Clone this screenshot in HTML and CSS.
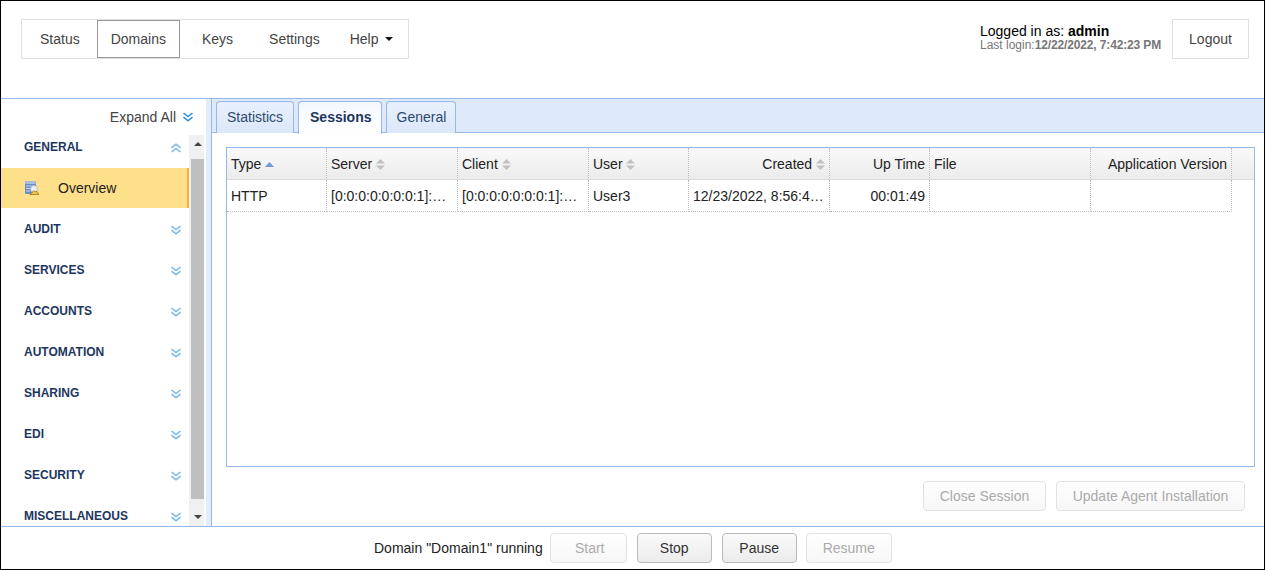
FILE: index.html
```html
<!DOCTYPE html>
<html lang="en">
<head>
<meta charset="utf-8">
<title>Domains</title>
<link rel="stylesheet" href="styles.css">
</head>
<body>
<svg class="defs" width="0" height="0" aria-hidden="true">
  <symbol id="chev-down" viewBox="0 0 10 10"><path d="M.5 1 5 4.600 9.500 1M.5 5.200 5 8.800 9.500 5.200" fill="none" stroke="currentColor" stroke-width="1.500"/></symbol>
  <symbol id="chev-up" viewBox="0 0 10 10"><path d="M.5 4.800 5 1.200 9.500 4.800M.5 9 5 5.400 9.500 9" fill="none" stroke="currentColor" stroke-width="1.500"/></symbol>
  <symbol id="sort" viewBox="0 0 9 11"><path d="M4.500 0 9 4.500H0zM4.500 11 0 6.500h9z" fill="currentColor"/></symbol>
</svg>
<div class="app">
  <header class="topbar">
    <nav class="nav">
      <a class="nav-item status">Status</a>
      <a class="nav-item current">Domains</a>
      <a class="nav-item keys">Keys</a>
      <a class="nav-item">Settings</a>
      <a class="nav-item help">Help<span class="caret"></span></a>
    </nav>
    <div class="account">
      <div class="who">Logged in as: <b>admin</b></div>
      <div class="last">Last login:<b>12/22/2022, 7:42:23 PM</b></div>
    </div>
    <button class="logout">Logout</button>
  </header>
  <div class="middle">
    <aside class="sidebar">
      <div class="expand">Expand All <svg class="chev strong"><use href="#chev-down"/></svg></div>
      <div class="side-body">
        <div class="side-list">
          <div class="group">GENERAL<svg class="chev"><use href="#chev-up"/></svg></div>
          <div class="side-link">
            <svg class="dbicon" viewBox="0 0 14 14">
              <rect x="0" y="0" width="11" height="13" rx="1.500" fill="#6b8cc4"/>
              <rect x="0" y="0" width="11" height="3" rx="1.500" fill="#a9bfe0"/>
              <path d="M1 5h9M1 7.500h5M1 10h4" stroke="#c9d7ee" stroke-width="1"/>
              <circle cx="9" cy="8" r="3.500" fill="#eef0f2" stroke="#9aa5b5" stroke-width=".6"/>
              <path d="M5 13.500 9 9.500l1.500 1.500 1-1 2.500 3.500z" fill="#e9c33c" stroke="#7f6510" stroke-width=".6"/>
            </svg>
            Overview
          </div>
          <div class="group">AUDIT<svg class="chev"><use href="#chev-down"/></svg></div>
          <div class="group">SERVICES<svg class="chev"><use href="#chev-down"/></svg></div>
          <div class="group">ACCOUNTS<svg class="chev"><use href="#chev-down"/></svg></div>
          <div class="group">AUTOMATION<svg class="chev"><use href="#chev-down"/></svg></div>
          <div class="group">SHARING<svg class="chev"><use href="#chev-down"/></svg></div>
          <div class="group">EDI<svg class="chev"><use href="#chev-down"/></svg></div>
          <div class="group">SECURITY<svg class="chev"><use href="#chev-down"/></svg></div>
          <div class="group">MISCELLANEOUS<svg class="chev"><use href="#chev-down"/></svg></div>
        </div>
        <div class="scrollbar">
          <span class="arrow up"></span>
          <span class="thumb"></span>
          <span class="arrow down"></span>
        </div>
      </div>
    </aside>
    <div class="splitter"></div>
    <main class="content">
      <div class="tabs">
        <a class="tab">Statistics</a>
        <a class="tab active">Sessions</a>
        <a class="tab last-tab">General</a>
      </div>
      <div class="panel">
        <div class="grid">
          <table>
            <colgroup>
              <col class="c100"><col class="c131"><col class="c131"><col class="c100"><col class="c141"><col class="c100"><col class="c161"><col class="c141"><col>
            </colgroup>
            <thead>
              <tr>
                <th>Type <svg class="sort asc" viewBox="0 0 9 5"><path d="M4.500 0 9 5H0z" fill="currentColor"/></svg></th>
                <th>Server <svg class="sort"><use href="#sort"/></svg></th>
                <th>Client <svg class="sort"><use href="#sort"/></svg></th>
                <th>User <svg class="sort"><use href="#sort"/></svg></th>
                <th class="right">Created <svg class="sort"><use href="#sort"/></svg></th>
                <th class="right">Up Time</th>
                <th>File</th>
                <th class="right">Application Version</th>
                <th class="filler"></th>
              </tr>
            </thead>
            <tbody>
              <tr>
                <td>HTTP</td>
                <td>[0:0:0:0:0:0:0:1]:…</td>
                <td>[0:0:0:0:0:0:0:1]:…</td>
                <td>User3</td>
                <td>12/23/2022, 8:56:4…</td>
                <td class="right">00:01:49</td>
                <td></td>
                <td></td>
                <td class="filler"></td>
              </tr>
            </tbody>
          </table>
        </div>
        <div class="actions">
          <button class="btn disabled close">Close Session</button>
          <button class="btn disabled agent">Update Agent Installation</button>
        </div>
      </div>
    </main>
  </div>
  <footer class="footer">
    <span class="state">Domain "Domain1" running</span>
    <button class="btn disabled start">Start</button>
    <button class="btn stop">Stop</button>
    <button class="btn pause">Pause</button>
    <button class="btn disabled resume">Resume</button>
  </footer>
</div>
</body>
</html>
```
FILE: styles.css
```css
* { box-sizing: border-box; }
html, body { margin: 0; padding: 0; height: 100%; }
body { font-family: "Liberation Sans", Arial, sans-serif; font-size: 14px; color: #333; background: #fff; overflow: hidden; }
.defs { position: absolute; }
button { font: inherit; }

.app { width: 1265px; height: 570px; border: 1px solid #000; display: flex; flex-direction: column; }

.topbar { height: 97px; flex: none; display: flex; align-items: flex-start; padding: 18px 15px 0 20px; }
.nav { display: flex; height: 40px; width: 388px; border: 1px solid #e0e0e0; padding: 0; }
.nav-item { display: flex; align-items: center; padding: 0 18px; height: 38px; color: #444; }
.nav-item.status { padding-right: 17px; }
.nav-item.current { padding: 0 13px; border: 1px solid #999; }
.nav-item.keys { margin-left: 4px; }
.nav-item.help { padding: 0 0 0 12px; }
.caret { width: 0; height: 0; margin-left: 7px; border-left: 4px solid transparent; border-right: 4px solid transparent; border-top: 4px solid #111; }
.account { margin-left: auto; margin-right: 11px; padding-top: 5px; width: 181px; color: #000; line-height: 14px; white-space: nowrap; }
.last { font-size: 12px; line-height: 14px; color: #777; }
.last b { letter-spacing: -.14px; }
.logout { width: 77px; height: 40px; background: #fff; border: 1px solid #e0e0e0; color: #444; padding: 0; }

.middle { flex: 1; min-height: 0; display: flex; border-top: 1px solid #94b8e8; border-bottom: 1px solid #94b8e8; }

.sidebar { width: 205px; flex: none; display: flex; flex-direction: column; }
.expand { height: 36px; flex: none; display: flex; align-items: center; justify-content: flex-end; gap: 7px; padding-right: 13px; color: #444; }
.side-body { flex: 1; min-height: 0; display: flex; padding-right: 2px; }
.side-list { flex: 1; min-width: 0; overflow: hidden; }
.group { height: 41px; display: flex; align-items: center; justify-content: space-between; padding: 0 8px 0 23px; font-size: 12px; font-weight: bold; color: #1d3660; flex: none; }
.group:first-child { height: 33px; padding-bottom: 10px; }
.chev { width: 10px; height: 10px; color: #74b6ee; flex: none; }
.group .chev { margin-top: 2px; }
.chev.strong { color: #2a8fdc; }
.side-link { height: 40px; display: flex; align-items: center; padding-left: 24px; background: #ffe08a; border-right: 2px solid #ffae42; color: #222; }
.dbicon { width: 14px; height: 14px; margin-right: 19px; }
.scrollbar { width: 15px; flex: none; background: #f0f0f0; display: flex; flex-direction: column; align-items: center; padding: 0 0 0 2px; }
.arrow { width: 0; height: 0; border-left: 4px solid transparent; border-right: 4px solid transparent; flex: none; }
.arrow.up { border-bottom: 4px solid #444; margin: 7px 0 13px; }
.arrow.down { border-top: 4px solid #444; margin: 16px 0 7px; }
.thumb { width: 100%; flex: 1; background: #bfbfbf; }

.splitter { width: 6px; flex: none; background: #e4ecf7; border-right: 1px solid #94b8e8; }

.content { flex: 1; min-width: 0; display: flex; flex-direction: column; }
.tabs { height: 34px; flex: none; display: flex; gap: 4px; padding: 2px 0 0 4px; background: #deeafc; border-bottom: 1px solid #94b8e8; }
.tab { height: 32px; padding: 0 10px 1px; display: flex; align-items: center; border: 1px solid #94b8e8; border-bottom: none; border-radius: 4px 4px 0 0; color: #2f4a6e; background: linear-gradient(#e8f0fc, #dbe8fb); }
.tab.last-tab { padding-right: 9px; }
.tab.active { padding: 0 9px 2px 11px; font-weight: bold; color: #1d3660; background: linear-gradient(#f4f8fe, #fff); margin-bottom: -1px; height: 33px; }

.panel { flex: 1; min-height: 0; padding: 14px 9px 0 14px; display: flex; flex-direction: column; }
.grid { height: 320px; flex: none; border: 1px solid #94b8e8; overflow: hidden; }
table { width: 100%; table-layout: fixed; border-collapse: separate; border-spacing: 0; color: #222; }
.c100 { width: 100px; } .c131 { width: 131px; } .c141 { width: 141px; } .c161 { width: 161px; }
th { height: 32px; padding: 0 4px; font-weight: normal; text-align: left; white-space: nowrap; border-right: 1px dotted #bbb; border-bottom: 1px solid #ddd; background: linear-gradient(#fafafa, #ebebeb); }
td { height: 32px; padding: 0 4px; white-space: nowrap; overflow: hidden; border-right: 1px dotted #bbb; border-bottom: 1px dotted #bbb; }
th.filler { border-right: none; }
td.filler { border: none; }
th.right, td.right { text-align: right; }
.sort { width: 9px; height: 11px; color: #c2c2c2; vertical-align: -1px; }
.sort.asc { height: 5px; color: #6f9bd1; vertical-align: 2px; }

.actions { display: flex; justify-content: flex-end; gap: 10px; padding: 14px 10px 0 0; }
.btn { height: 30px; padding: 0; border: 1px solid #bbb; border-radius: 4px; background: linear-gradient(#fafafa, #ececec); color: #333; }
.btn.disabled { border-color: #e2e2e2; background: linear-gradient(#fefefe, #f7f7f7); color: #aaa; }
.close { width: 123px; }
.agent { width: 189px; }

.footer { height: 42px; flex: none; display: flex; align-items: center; padding: 0 0 0 373px; }
.state { color: #222; margin-right: 7px; }
.start { width: 77px; margin-right: 10px; padding-left: 3px; }
.stop { width: 75px; margin-right: 10px; }
.pause { width: 75px; margin-right: 9px; }
.resume { width: 86px; }
```
